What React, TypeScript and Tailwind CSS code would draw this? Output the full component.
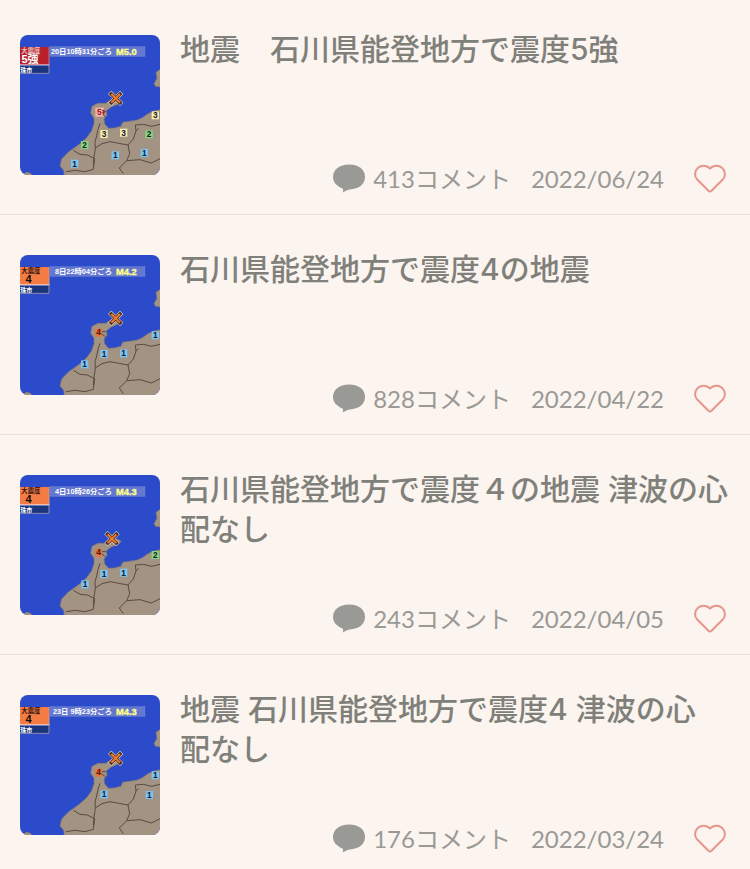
type Station = { x: number; y: number; level: number };

type Quake = {
  title: string[];
  comments: number;
  date: string;
  level: string;
  time: string;
  magnitude: string;
  epicenter: { x: number; y: number };
  stations: Station[];
};

const quakes: Quake[] = [
  {
    title: ['地震　石川県能登地方で震度5強'],
    comments: 413,
    date: '2022/06/24',
    level: '5強',
    time: '20日10時31分ごろ',
    magnitude: 'M5.0',
    epicenter: { x: 317, y: 220 },
    stations: [
      { x: 436, y: 271, level: 3 },
      { x: 282, y: 327, level: 3 },
      { x: 341, y: 323, level: 3 },
      { x: 417, y: 328, level: 2 },
      { x: 224, y: 360, level: 2 },
      { x: 403, y: 384, level: 1 },
      { x: 316, y: 391, level: 1 },
      { x: 194, y: 416, level: 1 },
    ],
  },
  {
    title: ['石川県能登地方で震度4の地震'],
    comments: 828,
    date: '2022/04/22',
    level: '4',
    time: '8日22時04分ごろ',
    magnitude: 'M4.2',
    epicenter: { x: 317, y: 220 },
    stations: [
      { x: 436, y: 271, level: 1 },
      { x: 282, y: 327, level: 1 },
      { x: 341, y: 325, level: 1 },
      { x: 224, y: 358, level: 1 },
    ],
  },
  {
    title: ['石川県能登地方で震度４の地震 津波の心', '配なし'],
    comments: 243,
    date: '2022/04/05',
    level: '4',
    time: '4日10時26分ごろ',
    magnitude: 'M4.3',
    epicenter: { x: 306, y: 221 },
    stations: [
      { x: 436, y: 270, level: 2 },
      { x: 282, y: 327, level: 1 },
      { x: 341, y: 323, level: 1 },
      { x: 225, y: 358, level: 1 },
    ],
  },
  {
    title: ['地震 石川県能登地方で震度4 津波の心', '配なし'],
    comments: 176,
    date: '2022/03/24',
    level: '4',
    time: '23日 9時23分ごろ',
    magnitude: 'M4.3',
    epicenter: { x: 317, y: 220 },
    stations: [
      { x: 436, y: 271, level: 1 },
      { x: 282, y: 328, level: 1 },
      { x: 418, y: 330, level: 1 },
    ],
  },
];

const levelColors: Record<number, string> = { 1: '#7cc4f2', 2: '#86d67c', 3: '#f7ecae' };

function QuakeMap({ quake }: { quake: Quake }) {
  const strong = quake.level === '5強';
  const { x, y } = quake.epicenter;
  const cross = `M${x - 13} ${y - 13}L${x + 13} ${y + 13}M${x + 13} ${y - 13}L${x - 13} ${y + 13}`;
  return (
    <svg
      viewBox="30 30 420 420"
      className="size-35 shrink-0 rounded-lg bg-[#2b4bca] font-['Liberation_Sans','Noto_Sans_CJK_JP',sans-serif]"
      role="img"
      aria-label="震度マップ"
    >
      <g fill="#a39383" stroke="#85786f" strokeWidth="2">
        <path d="M163 452L161 436L150 423L155 402L176 380L205 360L230 338L245 317L252 296L252 280L242 264L246 244L264 235L287 235L303 224L322 222L334 229L320 239L304 246L289 257L291 271L282 282L284 297L296 310L312 309L333 304L338 292L358 289L382 285L397 278L414 266L432 258L452 254V452Z" />
        <path d="M452 132L438 142L441 160L432 176L437 184L452 186Z" />
        <path d="M36 452L48 442L60 444L68 452Z" />
      </g>
      <g fill="none" stroke="#594b43" strokeWidth="3" strokeLinejoin="round">
        <path d="M273 260H288M274 266L286 275M270 295L264 313L260 333L255 350L256 370L252 396L250 421" />
        <path d="M190 376L210 388L232 390L254 401M168 440L196 436L225 440L250 433L254 401" />
        <path d="M256 369L276 356L300 350L326 355L354 360L370 342L378 318L376 300L401 298L424 304L450 298" />
        <path d="M354 360L359 386L350 407L328 429L340 446M350 407L390 404L424 414L450 401M378 318L386 310" />
      </g>
      <rect x="30" y="66" width="88" height="54" fill={strong ? '#b8202c' : '#f47c44'} />
      <path d="M30 120H118" stroke="#fff" strokeWidth="3" />
      <rect x="30" y="122" width="86" height="22" fill="#18357e" />
      <path d="M117 66V145H30" fill="none" stroke="#c3a8a8" strokeWidth="2" />
      <text x="34" y="83" fontSize="19" fontWeight="700" fill={strong ? '#e8c8c4' : '#35150f'}>大震度</text>
      <text x={strong ? 60 : 56} y="114" textAnchor="middle" fontSize="33" fontWeight="700" fill={strong ? '#fff' : '#160d0a'}>
        {quake.level}
      </text>
      <text x="31" y="140" fontSize="18" fontWeight="700" fill="#fff">珠市</text>
      <rect x="120" y="65" width="285" height="29" fill="#6478cf" stroke="#8793d7" />
      <text x="306" y="88" textAnchor="end" fontSize="22" fontWeight="700" fill="#fff">{quake.time}</text>
      <text x="318" y="89" fontSize="28" fontWeight="700" fill="#ffff88" stroke="#ffff88" strokeWidth="1">{quake.magnitude}</text>
      {quake.stations.map((s) => (
        <g key={`${s.x}-${s.y}`}>
          <rect x={s.x - 11} y={s.y - 12} width="22" height="24" fill={levelColors[s.level]} />
          <text x={s.x} y={s.y + 9} textAnchor="middle" fontSize="25" fontWeight="700" fill="#152032">{s.level}</text>
        </g>
      ))}
      {strong ? (
        <g>
          <rect x="256" y="248" width="26" height="27" fill="#f3b5b0" />
          <text x="268" y="270" textAnchor="middle" fontSize="25" fontWeight="700" fill="#a31623">5</text>
          <path d="M276 256H284M277 263H284M280 256V272" stroke="#a31623" strokeWidth="3" />
        </g>
      ) : (
        <g>
          <rect x="256" y="251" width="20" height="24" fill="#e9733d" />
          <text x="266" y="271" textAnchor="middle" fontSize="25" fontWeight="700" fill="#4b1710">4</text>
        </g>
      )}
      <path d={cross} stroke="#e8dfe0" strokeWidth="14" strokeLinecap="square" />
      <path d={cross} stroke="#4a2c20" strokeWidth="11" strokeLinecap="square" />
      <path d={cross} stroke="#f47b2c" strokeWidth="6" />
    </svg>
  );
}

function CommentIcon() {
  return (
    <svg viewBox="0 0 32 30" className="mr-2 h-[30px] w-8" fill="#999996" aria-hidden="true">
      <path d="M16 .5C6.500 .5 0 5.500 0 13C0 18 3.500 22 9.500 24.500C10.200 25 10.300 26 9.800 28.500C13 26.500 15 25.500 19 25.300C27.500 24 32 19.500 32 12.800C32 5.200 25.500 .5 16 .5Z" />
    </svg>
  );
}

function HeartIcon() {
  return (
    <svg viewBox="0 0 32 30" className="h-[30px] w-8" fill="none" stroke="#e8968b" strokeWidth="2" strokeLinejoin="round" aria-hidden="true">
      <path d="M16 4.500C12.500 1 7.500 .8 4 3.800C.4 7.200 .2 12 3 15.200L14.400 26.800C15.400 27.800 16.600 27.800 17.600 26.800L29 15.200C31.800 12 31.600 7.200 28 3.800C24.500 .8 19.500 1 16 4.500Z" />
    </svg>
  );
}

function QuakeRow({ quake }: { quake: Quake }) {
  return (
    <li className="flex gap-5 border-b border-[#eadfdb] px-5 pt-10 pb-[39px] first:pt-[35px] last:border-b-0 last:pb-[34px]">
      <QuakeMap quake={quake} />
      <div className="-mt-1.5 -mb-5 flex min-w-0 flex-1 flex-col justify-between">
        <h2 className="text-[30px] leading-10 font-medium text-[#80807a]">
          {quake.title.map((line) => (
            <span key={line} className="block">{line}</span>
          ))}
        </h2>
        <div className="flex h-8 items-center justify-end pr-1 text-2xl text-[#999996]">
          <CommentIcon />
          <span className="mr-5 font-['Lato','Noto_Sans_CJK_JP',sans-serif]">
            {quake.comments}コメント
          </span>
          <time className="mr-[30px] font-['Lato',sans-serif]">{quake.date}</time>
          <button type="button" aria-label="お気に入り">
            <HeartIcon />
          </button>
        </div>
      </div>
    </li>
  );
}

export default function App() {
  return (
    <main className="bg-[#fbf4ef] font-['Inter','Noto_Sans_CJK_JP',sans-serif]">
      <ul>
        {quakes.map((quake) => (
          <QuakeRow key={quake.date} quake={quake} />
        ))}
      </ul>
    </main>
  );
}
